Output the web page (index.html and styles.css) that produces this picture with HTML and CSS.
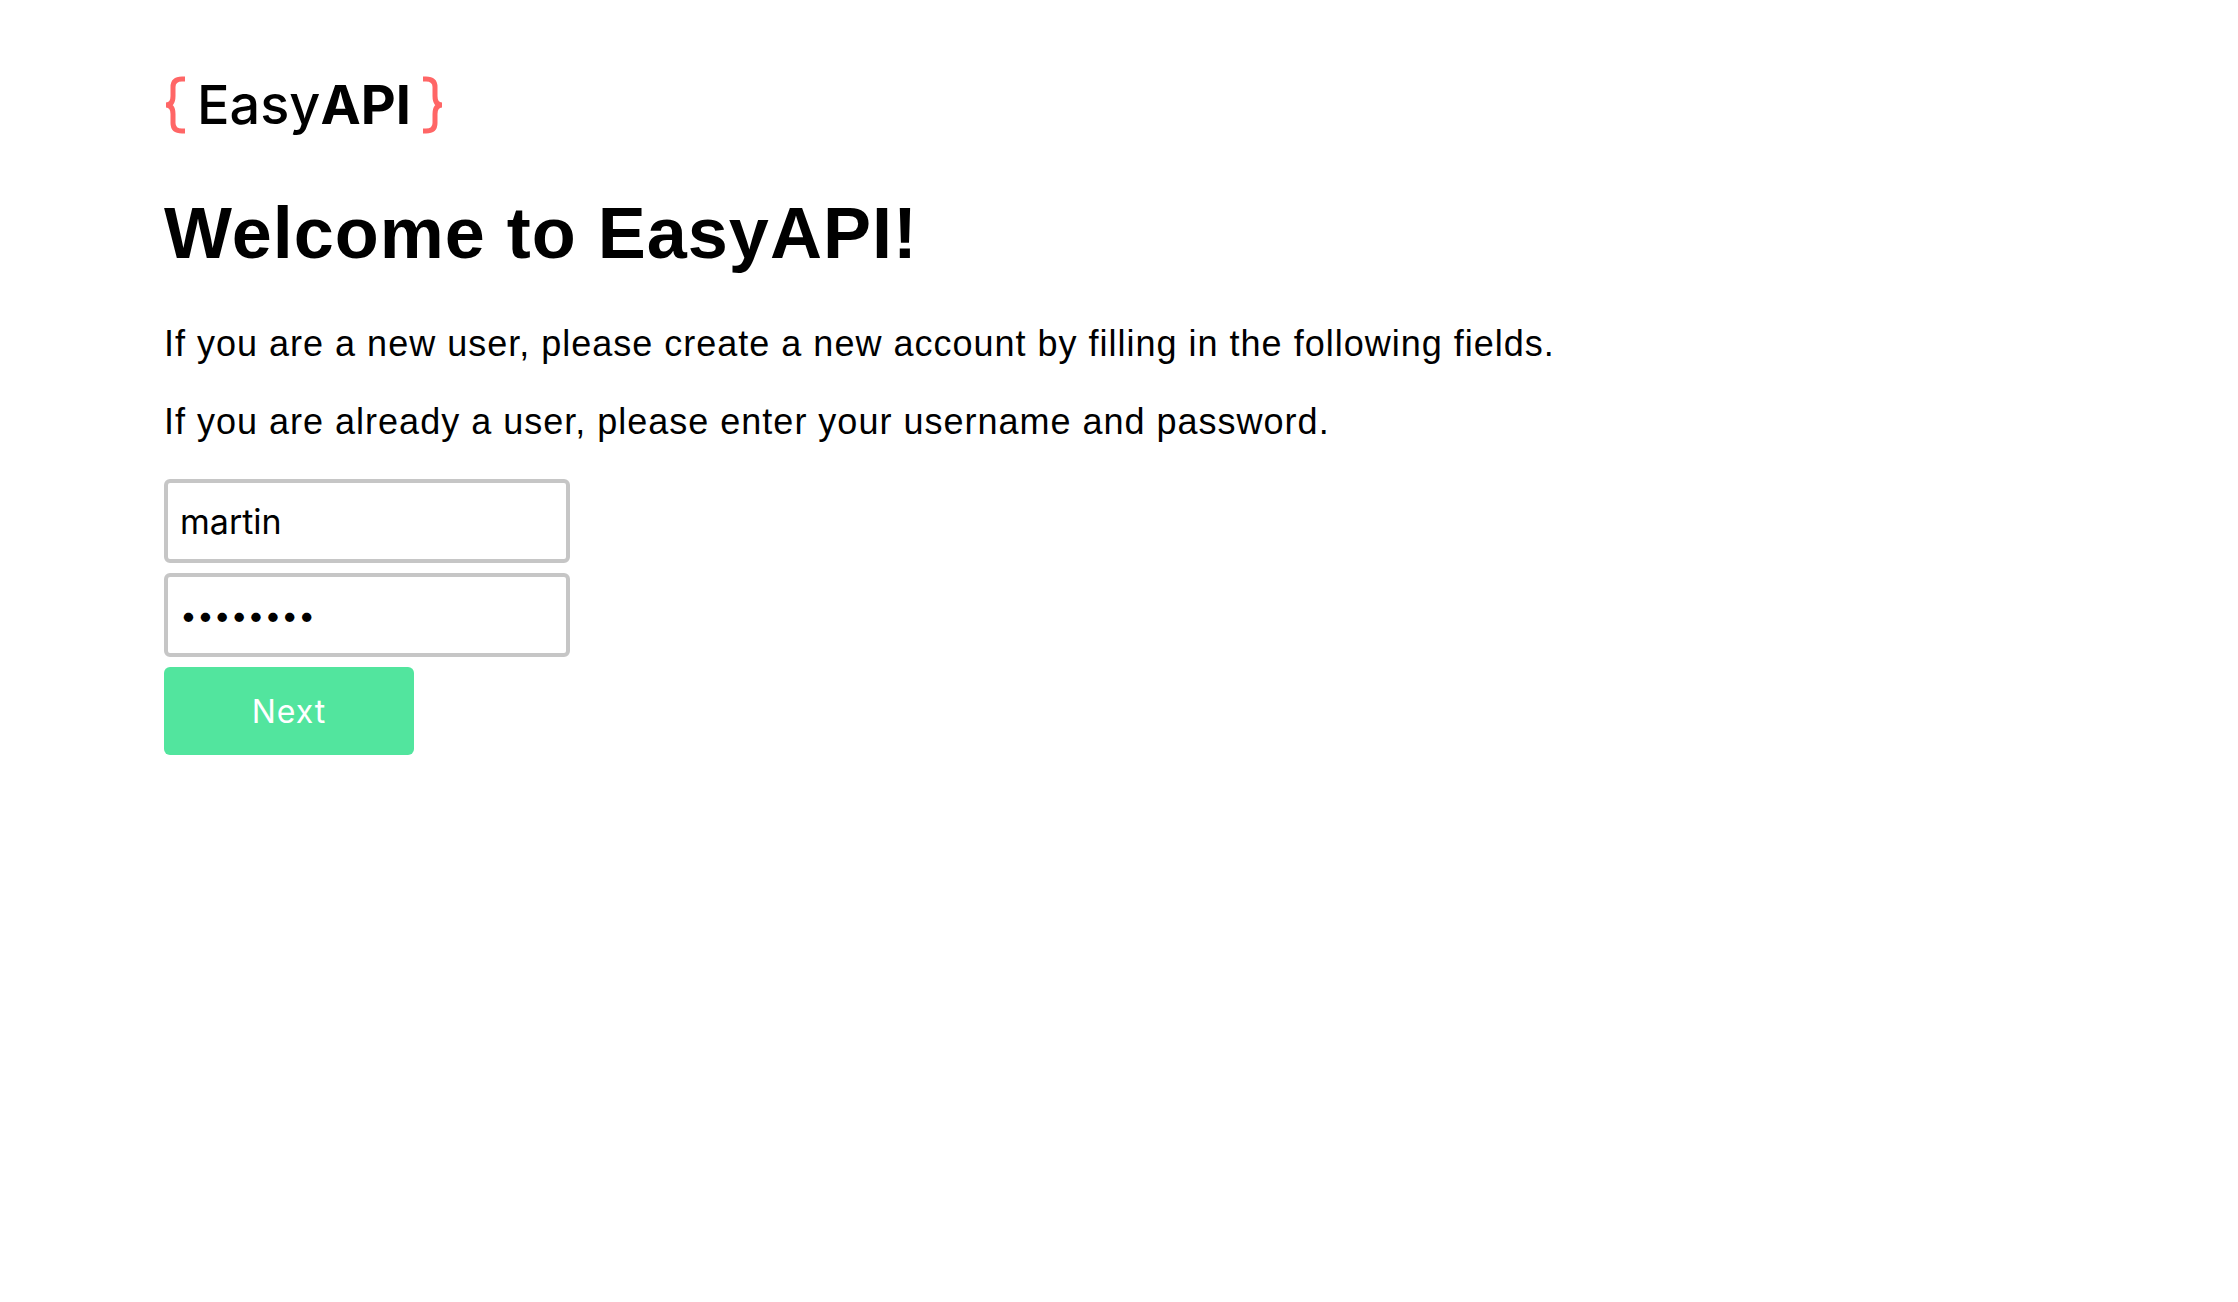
FILE: index.html
```html
<!DOCTYPE html>
<html lang="en">
<head>
<meta charset="utf-8">
<title>EasyAPI</title>
<link rel="stylesheet" href="styles.css">
</head>
<body>
<main class="page">
  <div class="logo">
    <svg class="brace" viewBox="0 0 22 58" aria-hidden="true"><path d="M21 3H18Q9 3 9 11V20Q9 29 2 29Q9 29 9 38V47Q9 55 18 55H21"/></svg>
    <span class="logo-name">Easy<b>API</b></span>
    <svg class="brace" viewBox="0 0 22 58" aria-hidden="true"><path d="M1 3H4Q13 3 13 11V20Q13 29 20 29Q13 29 13 38V47Q13 55 4 55H1"/></svg>
  </div>
  <h1 class="title">Welcome to EasyAPI!</h1>
  <p class="text">If you are a new user, please create a new account by filling in the following fields.</p>
  <p class="text">If you are already a user, please enter your username and password.</p>
  <form class="form">
    <input class="field" type="text" aria-label="Username" value="martin">
    <input class="field field-password" type="password" aria-label="Password" value="password">
    <button class="button" type="button">Next</button>
  </form>
</main>
</body>
</html>
```
FILE: styles.css
```css
* { box-sizing: border-box; }
body {
  margin: 0;
  background: #fff;
  color: #000;
  font-family: "Liberation Sans", Arial, sans-serif;
}
.page { padding: 75px 164px; }
.logo { display: flex; align-items: center; gap: 11px; height: 60px; }
.brace { width: 22px; height: 58px; fill: none; stroke: #ff6666; stroke-width: 5; }
.logo-name { font: 500 54px/60px Inter, sans-serif; }
.logo-name b { font-weight: 700; }
.title { margin: 56px 0 48px; font-size: 72px; line-height: 84px; letter-spacing: 1px; }
.text { margin: 0 0 36px; font-size: 36px; line-height: 42px; letter-spacing: 1px; }
.form { display: flex; flex-direction: column; align-items: flex-start; gap: 10px; }
.field {
  width: 406px;
  height: 84px;
  padding: 0 12px;
  border: 4px solid #c6c6c6;
  border-radius: 6px;
  font: 34px Inter, sans-serif;
}
.field-password { font-size: 30px; }
.button {
  width: 250px;
  height: 88px;
  border: 0;
  border-radius: 6px;
  background: #52e59e;
  color: #fff;
  font: 32px Inter, sans-serif;
  letter-spacing: 1px;
}
```
